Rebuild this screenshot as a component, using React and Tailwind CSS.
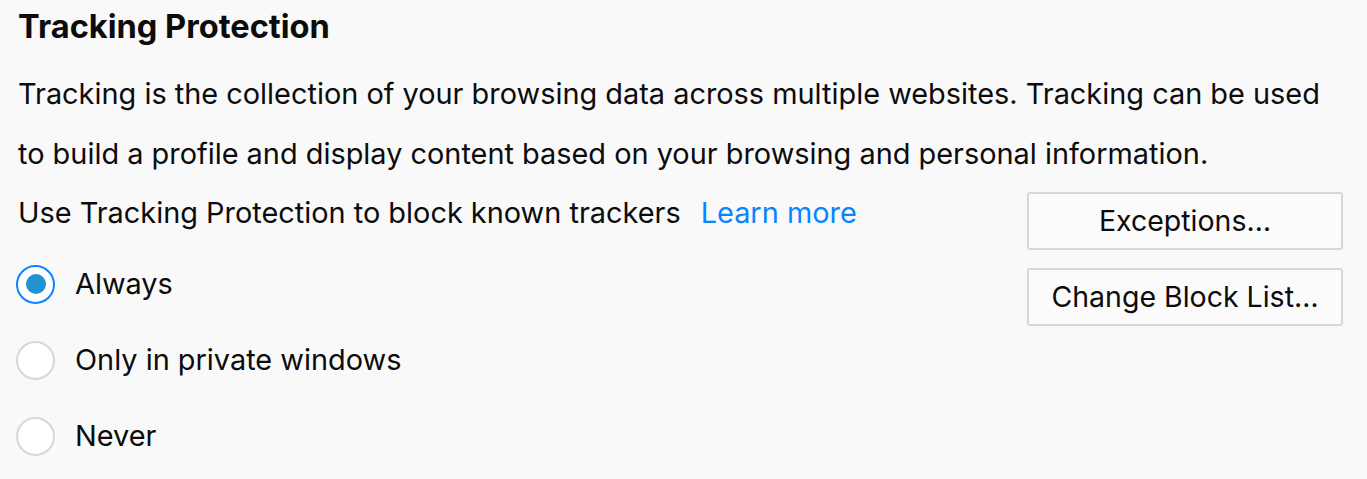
export default function App() {
  const options = [
    { id: 'always', label: 'Always' },
    { id: 'private', label: 'Only in private windows' },
    { id: 'never', label: 'Never' },
  ];
  const selected = 'always';

  return (
    <div className="min-h-screen w-full bg-[#f9f9fa] text-[#0c0c0d] font-['Inter','Liberation_Sans',sans-serif] pl-[18px] pr-[24px]">
      <h1 className="text-[32.6px] leading-[53px] font-bold">Tracking Protection</h1>

      <p className="mt-[11px] text-[28.9px] leading-[60px]">
        Tracking is the collection of your browsing data across multiple websites. Tracking can be used
        to build a profile and display content based on your browsing and personal information.
      </p>

      <div className="flex justify-between">
        <div>
          <div className="text-[28.9px] leading-[58px]">
            Use Tracking Protection to block known trackers
            <a href="#" className="ml-[20px] text-[#0a84ff]">Learn more</a>
          </div>

          <div className="mt-[4px]">
            {options.map((o) => (
              <label key={o.id} className="flex items-center h-[76px] -ml-[2px]">
                {selected === o.id ? (
                  <span className="w-[39px] h-[39px] rounded-full border-2 border-[#0a84ff] bg-white flex items-center justify-center">
                    <span className="w-[20px] h-[20px] rounded-full bg-[#2292d0]" />
                  </span>
                ) : (
                  <span className="w-[39px] h-[39px] rounded-full border-2 border-[#d7d7db] bg-white" />
                )}
                <span className="ml-[20px] text-[28.9px]">{o.label}</span>
              </label>
            ))}
          </div>
        </div>

        <div className="flex flex-col gap-[18px] pt-[8px] w-[316px]">
          <button className="h-[58px] rounded-[3px] border-2 border-[#d7d7db] bg-[#fbfbfb] text-[28.5px]">
            Exceptions…
          </button>
          <button className="h-[58px] rounded-[3px] border-2 border-[#d7d7db] bg-[#fbfbfb] text-[28.5px]">
            Change Block List…
          </button>
        </div>
      </div>
    </div>
  );
}
